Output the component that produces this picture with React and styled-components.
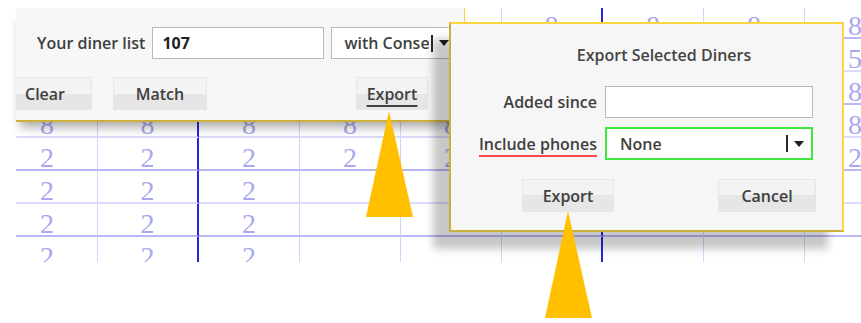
import React from 'react'
import styled, { createGlobalStyle } from 'styled-components'

const GlobalStyle = createGlobalStyle`
    html, body {
        margin: 0;
        padding: 0;
        background: #fff;
    }
    body {
        font-family: "Open Sans", "Liberation Sans", sans-serif;
    }
`

// digits shown in the sheet behind the panels, row by row
const rows = [
    ['8', '8', '8', '8', '8', '8', '8', '8', '8'],
    ['5', '5', '5', '5', '5', '5', '5', '5', '5'],
    ['8', '8', '8', '8', '8', '8', '8', '8', '8'],
    ['8', '8', '8', '8', '8', '8', '8', '8', '8'],
    ['2', '2', '2', '2', '2', '2', '2', '2', '2'],
    ['2', '2', '2', '', '', '', '', '', ''],
    ['2', '2', '2', '', '', '', '', '', ''],
    ['2', '2', '2', '', '', '', '', '', ''],
]

const App = () => {
    return (
        <Stage>
            <GlobalStyle />

            <Viewport>
                <Sheet>
                    {rows.map((row, r) =>
                        row.map((digit, c) => (
                            <Cell key={r + '-' + c} $major={c % 4 === 1} $dark={r % 2 === 0}>
                                {digit}
                            </Cell>
                        ))
                    )}
                </Sheet>
            </Viewport>

            <Toolbar>
                <ListRow>
                    <Label>Your diner list</Label>
                    <TextField $w={172}>107</TextField>
                    <Select $w={126} $pad={12}>
                        <SelectText>with Conse</SelectText>
                        <Cursor />
                        <Arrow />
                    </Select>
                </ListRow>
                <ButtonRow>
                    <Button $w={94}>Clear</Button>
                    <Button $w={94}>Match</Button>
                    <Button $w={72} $push $underline>Export</Button>
                </ButtonRow>
            </Toolbar>

            <Dialog>
                <Title>Export Selected Diners</Title>
                <Form>
                    <FieldLabel>Added since</FieldLabel>
                    <Input />
                    <FieldLabel><Flagged>Include phones</Flagged></FieldLabel>
                    <Select $w={208} $pad={13} $focus>
                        <SelectText>None</SelectText>
                        <Cursor />
                        <Arrow />
                    </Select>
                </Form>
                <DialogButtons>
                    <Button $w={92}>Export</Button>
                    <Button $w={98}>Cancel</Button>
                </DialogButtons>
            </Dialog>

            <Pointers viewBox="0 0 861 323">
                <polygon points="389,111 413,217 366,217" />
                <polygon points="568,211 592,318 545,318" />
            </Pointers>
        </Stage>
    )
}


const Stage = styled.div`
    position: relative;
    width: 861px;
    height: 323px;
    overflow: hidden;
    background: #fff;
`

const Viewport = styled.div`
    margin: 8px 0 0 16px;
    width: 845px;
    height: 254px;
    overflow: hidden;
`

const Sheet = styled.div`
    display: grid;
    grid-template-columns: repeat(9, 101px);
    grid-auto-rows: 33px;
    width: max-content;
    margin: -2px 0 0 -19px;
`

const Cell = styled.div`
    box-sizing: border-box;
    border-right: ${p => p.$major ? '2px solid #2626e2' : '1.5px solid #d3d3fb'};
    border-bottom: 2px solid ${p => p.$dark ? '#b8b8f6' : '#dcdcfc'};
    padding-top: 6px;
    font-family: "Liberation Serif", "DejaVu Serif", serif;
    font-size: 28px;
    line-height: 1;
    color: #a8a8ee;
    text-align: center;
`

const Toolbar = styled.div`
    position: absolute;
    top: 8px;
    left: 16px;
    width: 449px;
    height: 114px;
    box-sizing: border-box;
    padding-top: 19px;
    display: flex;
    flex-direction: column;
    gap: 18px;
    background: #f7f7f7;
    border-right: 1.5px solid #f6d43c;
    border-bottom: 2px solid #cdae3a;
    box-shadow: 0 9px 10px -4px rgba(0, 0, 0, 0.34);
    overflow: hidden;
`

const ListRow = styled.div`
    display: flex;
    align-items: center;
    gap: 7px;
    padding-left: 21px;
    height: 32px;
`

const Label = styled.span`
    font-size: 16px;
    font-weight: 600;
    color: #404040;
    white-space: nowrap;
`

const TextField = styled.div`
    box-sizing: border-box;
    width: ${p => p.$w}px;
    height: 32px;
    flex: none;
    display: flex;
    align-items: center;
    padding: 0 9px;
    background: #fff;
    border: 1.5px solid #b9b9b9;
    font-size: 16px;
    font-weight: 700;
    color: #222;
`

const Select = styled.div`
    box-sizing: border-box;
    width: ${p => p.$w}px;
    height: ${p => p.$focus ? 33 : 32}px;
    flex: none;
    display: flex;
    align-items: center;
    padding: 0 7px 0 ${p => p.$pad}px;
    background: #fff;
    border: ${p => p.$focus ? '2px solid #3fe83f' : '1.5px solid #b9b9b9'};
    font-size: 16px;
    font-weight: 600;
    color: #404040;
`

const SelectText = styled.span`
    flex: 1;
    white-space: nowrap;
    overflow: hidden;
`

const Cursor = styled.span`
    width: 2px;
    height: 17px;
    background: #2a2a2a;
    margin: 0 6px 0 2px;
    flex: none;
`

const Arrow = styled.span`
    width: 0;
    height: 0;
    flex: none;
    border-left: 5px solid transparent;
    border-right: 5px solid transparent;
    border-top: 6px solid #1e1e1e;
`

const ButtonRow = styled.div`
    display: flex;
    gap: 21px;
    margin-left: -18px;
    padding-right: 36px;
`

const Button = styled.div`
    box-sizing: border-box;
    width: ${p => p.$w}px;
    height: 33px;
    margin-left: ${p => p.$push ? 'auto' : '0'};
    display: flex;
    align-items: center;
    justify-content: center;
    background: linear-gradient(#f3f3f3 0 50%, #e6e6e6 50% 100%);
    border: 1px solid #e6e6e6;
    font-size: 16px;
    font-weight: 600;
    color: #404040;
    text-decoration: ${p => p.$underline ? 'underline' : 'none'};
    text-decoration-thickness: 2px;
    text-underline-offset: 5px;
`

const Dialog = styled.div`
    position: absolute;
    top: 22px;
    left: 449px;
    width: 395px;
    height: 210px;
    box-sizing: border-box;
    padding: 21px 29px 18px 18px;
    display: flex;
    flex-direction: column;
    background: #f6f6f6;
    border: 2px solid;
    border-color: #fbd640 #fbd640 #c9b03c #c9b03c;
    box-shadow: -16px 17px 8px rgba(0, 0, 0, 0.22);
`

const Title = styled.div`
    padding-left: 46px;
    margin-bottom: 21px;
    text-align: center;
    font-size: 16px;
    font-weight: 600;
    line-height: 20px;
    color: #444;
`

const Form = styled.div`
    display: grid;
    grid-template-columns: 128px 208px;
    column-gap: 8px;
    row-gap: 9px;
    align-items: center;
`

const FieldLabel = styled.div`
    text-align: right;
    font-size: 16px;
    font-weight: 600;
    color: #404040;
    white-space: nowrap;
`

const Flagged = styled.span`
    text-decoration: underline;
    text-decoration-color: #ff4848;
    text-decoration-thickness: 2px;
    text-underline-offset: 5px;
`

const Input = styled.div`
    box-sizing: border-box;
    height: 32px;
    background: #fff;
    border: 1.5px solid #b9b9b9;
`

const DialogButtons = styled.div`
    display: flex;
    justify-content: space-between;
    margin-top: 19px;
    margin-right: -3px;
    padding-left: 53px;
`

const Pointers = styled.svg`
    position: absolute;
    top: 0;
    left: 0;
    width: 861px;
    height: 323px;
    pointer-events: none;
    fill: #ffc000;
`

export default App
